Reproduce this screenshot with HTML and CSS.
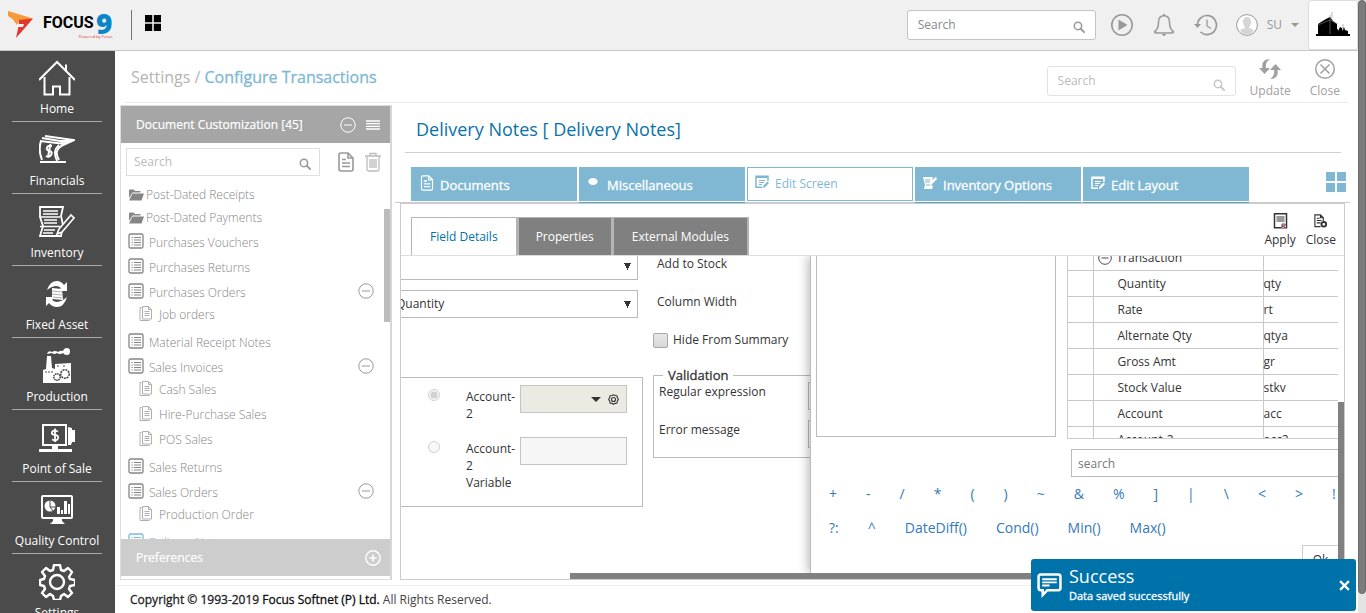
FILE: index.html
```html
<!DOCTYPE html>
<html lang="en">
<head>
<meta charset="utf-8">
<title>Configure Transactions</title>
<link rel="stylesheet" href="styles.css">
</head>
<body>
<svg class="defs" aria-hidden="true">
  <symbol id="i-search" viewBox="0 0 14 14"><circle cx="5.8" cy="5.8" r="4.3" fill="none" stroke="currentColor" stroke-width="1.8"/><path d="M9 9l4 4" stroke="currentColor" stroke-width="2.2" stroke-linecap="round"/></symbol>
  <symbol id="i-grid" viewBox="0 0 20 20"><path d="M0 0h9v9H0zM11 0h9v9h-9zM0 11h9v9H0zM11 11h9v9h-9z" fill="currentColor"/></symbol>
  <symbol id="i-minus" viewBox="0 0 16 16"><circle cx="8" cy="8" r="7.2" fill="none" stroke="currentColor"/><path d="M4 8h8" stroke="currentColor"/></symbol>
  <symbol id="i-plus" viewBox="0 0 16 16"><circle cx="8" cy="8" r="7.2" fill="none" stroke="currentColor" stroke-width="1.4"/><path d="M4.500 8h7M8 4.500v7" stroke="currentColor" stroke-width="1.600"/></symbol>
  <symbol id="i-folder" viewBox="0 0 16 12"><path d="M1 5V1.500Q1 .5 2 .5h3.500l1.500 1.500h5.500v1.500H4.500L1 9z" fill="currentColor"/><path d="M4.500 4.500H16L13.500 11.500H1z" fill="currentColor"/></symbol>
  <symbol id="i-list" viewBox="0 0 16 16"><rect x="1" y="1" width="14" height="14" rx="1.500" fill="none" stroke="currentColor" stroke-width="1.300"/><path d="M3.500 4.500h1.200M6 4.500h7M3.500 7h1.200M6 7h7M3.500 9.500h1.200M6 9.500h7M3.500 12h1.200M6 12h7" stroke="currentColor"/></symbol>
  <symbol id="i-pages" viewBox="0 0 14 16"><path d="M3.500 1.500h6l3 3v9.500h-9zM9.500 1.500v3h3M2.500 2.500h-1.500v13h9.500M5.500 6.500h5M5.500 8.500h5M5.500 10.500h5" fill="none" stroke="currentColor"/></symbol>
  <symbol id="i-doc" viewBox="0 0 16 20"><path d="M3 1h7l5 5v11q0 2-2 2H3q-2 0-2-2V3q0-2 2-2zM10 1v5h5M4 7.500h4M4 11h8M4 14.500h8" fill="none" stroke="currentColor" stroke-width="1.600"/></symbol>
  <symbol id="i-edit" viewBox="0 0 14 14"><path d="M13 6V1.200H1v11h6" fill="none" stroke="currentColor" stroke-width="1.500"/><path d="M1 1h12v2H1zM8 13l.5-2.500L12.500 6.500 14 8l-4 4.300z" fill="currentColor"/><path d="M4 5.500h6M4 7.500h5M4 9.500h3" stroke="currentColor"/></symbol>
</svg>
<div class="app">
  <div class="page">
    <header class="topbar">
      <div class="logo">
        <svg class="logo-mark" viewBox="0 0 26 28"><path d="M0 0L25 7.500 17 10H8L0 5z" fill="#f5993b"/><path d="M0 4l8 6v-2l-5-5zM3 6l6 8 2-5z" fill="#f5993b"/><path d="M11 9l14-1.500L16 18 8 27l2-9z" fill="#e2362b"/><path d="M9 13h7l-1 3H9.500z" fill="#f0f0f0"/></svg>
        <div class="logo-text">
          <div><span class="logo-word">FOCUS</span><span class="logo-nine">9</span></div>
          <small>Powered by Focus</small>
        </div>
      </div>
      <button class="apps" aria-label="Applications"><svg viewBox="0 0 20 20"><use href="#i-grid"/></svg></button>
      <label class="search search-top"><input type="text" placeholder="Search" aria-label="Search"><svg viewBox="0 0 14 14"><use href="#i-search"/></svg></label>
      <button class="top-icon" aria-label="Play"><svg viewBox="0 0 24 24"><circle cx="12" cy="12" r="10.200" fill="none" stroke="currentColor" stroke-width="1.600"/><path d="M8.500 6.500L17.500 12l-9 5.500z" fill="currentColor"/></svg></button>
      <button class="top-icon" aria-label="Notifications"><svg viewBox="0 0 24 24"><path d="M12 2.800c-4 0-5.500 3.200-5.500 6.500 0 5-1.500 7.700-4 9.500 0 1 1 1.200 2.500 1.200h14c1.500 0 2.500-.2 2.500-1.200-2.500-1.800-4-4.500-4-9.500 0-3.300-1.500-6.500-5.500-6.500z" fill="none" stroke="currentColor" stroke-width="1.500"/><path d="M10 21h4q-.5 2-2 2t-2-2zM11 1h2v2h-2z" fill="currentColor"/></svg></button>
      <button class="top-icon" aria-label="History"><svg viewBox="0 0 24 24"><path d="M3.500 13a9.500 9.500 0 1 1 3 6" fill="none" stroke="currentColor" stroke-width="1.700"/><path d="M0 11h7l-3.500 4z" fill="currentColor"/><path d="M13 6.500v6.500l4 2.500" fill="none" stroke="currentColor" stroke-width="1.300"/></svg></button>
      <button class="user"><svg viewBox="0 0 22 22"><circle cx="11" cy="11" r="10.400" fill="#fff" stroke="#999"/><path d="M11 3c-3 0-4 2-4 5 0 2.500 1 4 2 5-.5 2-4 2-5 3.500C6 19 8 20.500 11 20.500s5-1.500 7-4c-1-1.500-4.500-1.500-5-3.500 1-1 2-2.500 2-5 0-3-1-5-4-5z" fill="#d6d6d6"/></svg>SU<i class="caret"></i></button>
      <div class="company"><svg viewBox="0 0 34 26"><path d="M2 23V12l3-2 5-3 4-2 3 4 4 3v11zM20 23v-5l2-1v2l2-4 2 1v3l2-4 1 3 3 1v4z" fill="#000"/><path d="M0 22h34v2H0z" fill="#000"/><path d="M14 22V3M16 6V0M27 18v-6" stroke="#888" stroke-width=".6"/><path d="M2 13l12-5 8 4" fill="none" stroke="#999" stroke-width=".5"/></svg></div>
    </header>
    <div class="body">
      <nav class="nav">
        <a href="#home"><svg viewBox="0 0 36 36"><path d="M0 20L18 2l18 18M5.500 17v17.500H14v-8h7v8h9.500V17M27 10V4.500" fill="none" stroke="#fff" stroke-width="2"/></svg>Home</a>
        <a href="#financials"><svg viewBox="0 0 36 36"><path d="M2 9Q-1 18 3 28" fill="none" stroke="#fff" stroke-width="2"/><path d="M6 4l29 4-11 5Q14 18 20 28M1 9l25 3M3 6l24 4" fill="none" stroke="#fff" stroke-width="2"/><path d="M20 13q-7 6-2 16M24 12l10-4-12 1z" fill="none" stroke="#fff" stroke-width="1.800"/><path d="M1 29h26v2H1z" fill="#fff"/><path d="M13 14q-4-1-5 1.500t2.500 3.500 1.500 4-5 1M11.500 12L9 25" fill="none" stroke="#fff" stroke-width="2"/></svg>Financials</a>
        <a href="#inventory"><svg viewBox="0 0 36 36"><path d="M1 3h23l-2 9 2 9-2 11H1l3-10-3-9z" fill="none" stroke="#fff" stroke-width="1.800"/><path d="M4 7h15M4 10h15M5 16h13M5 19h13M5 26h11M4 29h10M1 13h20M1 22.500h20" stroke="#fff" stroke-width="1.500"/><path d="M20 25L32 11l3 3-12 14-5 2z" fill="#4b4b4b" stroke="#fff" stroke-width="1.600"/></svg>Inventory</a>
        <a href="#assets"><svg viewBox="0 0 36 36"><path d="M8 14Q11 5 18 5q4 0 7 4l3-3v9h-9l3-3q-5-5-14 2z" fill="#fff"/><path d="M28 21q-3 10-10 10-5 0-8-4l-3 3v-9h9l-3 3q6 5 15-3z" fill="#fff"/><path d="M13 12l10 1 1 11-11-1z" fill="#fff"/><path d="M13 15l10 1M13 18l10 1M14 21l9 1" stroke="#999" stroke-width=".8"/></svg>Fixed Asset</a>
        <a href="#production"><svg viewBox="0 0 36 36"><path d="M4 35V22l3-1L8 8h4l1 12 3 1v-5l16-1v20z" fill="#fff"/><path d="M8 6q1-4 5-2 3-2 6 0 3-2 5-1 1-3 4-3t3 3.500-3 3.500-4-2q-3 2-6 0-3 2-5 0z" fill="#fff"/><path d="M6 24h8M18 18h3M24 18h3" stroke="#4b4b4b" stroke-dasharray="2 1"/><circle cx="18" cy="29" r="3.200" fill="none" stroke="#4b4b4b" stroke-width="1.600" stroke-dasharray="1.500 .6"/><circle cx="26" cy="26" r="4.200" fill="none" stroke="#4b4b4b" stroke-width="1.600" stroke-dasharray="2 .8"/></svg>Production</a>
        <a href="#pos"><svg viewBox="0 0 36 36"><path d="M4 5h23v20H4z" fill="none" stroke="#fff" stroke-width="2"/><path d="M29 7l4 1v2h3v12h-3l-1 3h-3zM13 25h6v4h14v3H0v-3h13z" fill="#fff"/><path d="M19 11.500q-5-2-6 .5t3 3 3 3.500-6 1M16 8.500v13.500" fill="none" stroke="#fff" stroke-width="1.800"/></svg>Point of Sale</a>
        <a href="#quality"><svg viewBox="0 0 36 36"><rect x="3" y="4" width="30" height="22" rx="1" fill="none" stroke="#fff" stroke-width="2"/><path d="M14 27h9v2l3 3H11l3-3zM18 22v-7h3v7zM22 22v-4h2v4zM25 22V9h3v13zM29 22V12h2v10z" fill="#fff"/><circle cx="11" cy="14" r="5.500" fill="#fff"/><path d="M11 8v7h6M11 15l3 4" stroke="#4b4b4b" fill="none"/></svg>Quality Control</a>
        <a href="#settings"><svg viewBox="0 0 36 36"><path d="M15 1h6l1 5 3 1 4-3 4 4-3 5 1 2 5 1v5l-5 1-1 3 3 4-4 4-4-3-3 2-1 4h-6l-1-4-3-2-4 3-4-4 3-4-1-3-4-1v-5l4-1 1-3-3-4 4-4 4 3 3-1z" fill="none" stroke="#fff" stroke-width="2.400" stroke-linejoin="round"/><circle cx="18" cy="18" r="7" fill="none" stroke="#fff" stroke-width="2.400"/></svg>Settings</a>
      </nav>
      <main class="main">
        <div class="crumbs">
          <h1>Settings / <b>Configure Transactions</b></h1>
          <label class="search search-sub"><input type="text" placeholder="Search" aria-label="Search transactions"><svg viewBox="0 0 14 14"><use href="#i-search"/></svg></label>
          <button class="tool"><svg viewBox="0 0 22 22"><path d="M11 1Q2 1 3.500 10H0l5.500 6L11 10H7Q6 4 11 1zM11 21q9 0 7.500-9H22l-5.500-6L11 12h4q1 6-4 9z" fill="currentColor"/></svg>Update</button>
          <button class="tool"><svg viewBox="0 0 22 22"><circle cx="11" cy="11" r="9.300" fill="none" stroke="currentColor" stroke-width="1.500"/><path d="M6.500 6.500l9 9M15.500 6.500l-9 9" stroke="currentColor" stroke-width="1.500"/></svg>Close</button>
        </div>
        <div class="workspace">
          <aside class="side">
            <div class="side-head"><span>Document Customization [45]</span><svg viewBox="0 0 16 16"><use href="#i-minus"/></svg><svg class="menu" viewBox="0 0 14 10"><path d="M0 1h14M0 3.700h14M0 6.400h14M0 9h14" stroke="#fff" stroke-width="1.300"/></svg></div>
            <div class="side-tools">
              <label class="search search-side"><input type="text" placeholder="Search" aria-label="Search documents"><svg viewBox="0 0 14 14"><use href="#i-search"/></svg></label>
              <button aria-label="New"><svg viewBox="0 0 16 20"><use href="#i-doc"/></svg></button>
              <button class="trash" aria-label="Delete"><svg viewBox="0 0 16 20"><path d="M2 5v12.500q0 1.500 1.500 1.500h9q1.500 0 1.500-1.500V5M0 4h16M5 4V1.500h6V4M5 7v9M7 7v9M9 7v9M11 7v9" fill="none" stroke="currentColor" stroke-width="1.300"/></svg></button>
            </div>
            <div class="tree-wrap">
              <ul class="tree">
                <li class="folder"><svg viewBox="0 0 16 12"><use href="#i-folder"/></svg>Post-Dated Receipts</li>
                <li class="folder"><svg viewBox="0 0 16 12"><use href="#i-folder"/></svg>Post-Dated Payments</li>
                <li><svg><use href="#i-list"/></svg>Purchases Vouchers</li>
                <li><svg><use href="#i-list"/></svg>Purchases Returns</li>
                <li><svg><use href="#i-list"/></svg>Purchases Orders<svg class="fold"><use href="#i-minus"/></svg></li>
                <li class="sub"><svg><use href="#i-pages"/></svg>Job orders</li>
                <li><svg><use href="#i-list"/></svg>Material Receipt Notes</li>
                <li><svg><use href="#i-list"/></svg>Sales Invoices<svg class="fold"><use href="#i-minus"/></svg></li>
                <li class="sub"><svg><use href="#i-pages"/></svg>Cash Sales</li>
                <li class="sub"><svg><use href="#i-pages"/></svg>Hire-Purchase Sales</li>
                <li class="sub"><svg><use href="#i-pages"/></svg>POS Sales</li>
                <li><svg><use href="#i-list"/></svg>Sales Returns</li>
                <li><svg><use href="#i-list"/></svg>Sales Orders<svg class="fold"><use href="#i-minus"/></svg></li>
                <li class="sub"><svg><use href="#i-pages"/></svg>Production Order</li>
                <li class="current"><svg><use href="#i-list"/></svg>Delivery Notes</li>
              </ul>
              <div class="tree-bar"></div>
            </div>
            <div class="side-foot"><span>Preferences</span><svg viewBox="0 0 16 16"><use href="#i-plus"/></svg></div>
          </aside>
          <section class="detail">
            <h2>Delivery Notes [ Delivery Notes]</h2>
            <div class="tabs">
              <button><svg viewBox="0 0 16 20"><use href="#i-doc"/></svg>Documents</button>
              <button class="under"><svg viewBox="0 0 14 14"><ellipse cx="6" cy="5.500" rx="4.700" ry="3.500" fill="#fff"/></svg>Miscellaneous</button>
              <button class="on"><svg viewBox="0 0 14 14"><use href="#i-edit"/></svg>Edit Screen</button>
              <button class="under"><svg viewBox="0 0 14 14"><path d="M0 1h10l-1 3 4-3 1 2-6 6 2 1-1 3H1l1-4z" fill="#fff"/><path d="M2 4h5M2 6h5M3 9h4" stroke="#80b8d4"/></svg>Inventory Options</button>
              <button class="under"><svg viewBox="0 0 14 14"><use href="#i-edit"/></svg>Edit Layout</button>
              <svg class="tiles" viewBox="0 0 20 20"><use href="#i-grid"/></svg>
            </div>
            <div class="editor">
              <div class="editor-head">
                <div class="subtabs"><button class="on">Field Details</button><button>Properties</button><button>External Modules</button></div>
                <button class="act"><svg viewBox="0 0 14 16"><path d="M1 .8h12v14H1z" fill="none" stroke="currentColor" stroke-width="1.500"/><path d="M3 4h8M3 6h8M3 8h8" stroke="currentColor"/><path d="M8 10h4v5H8z" fill="#fff"/><path d="M8.500 15v-4h3v2h-3l3.500 2" fill="none" stroke="#734"/></svg>Apply</button>
                <button class="act"><svg viewBox="0 0 16 16"><path d="M8 14H2V1.500h6l3 3V8M8 1.500v3h3M4 5h3M4 7.500h5M4 10h4" fill="none" stroke="currentColor" stroke-width="1.200"/><circle cx="11.500" cy="11.500" r="2.500" fill="none" stroke="currentColor" stroke-width="2"/></svg>Close</button>
              </div>
              <div class="scroller">
                <div class="content">
                  <div class="form">
                    <div class="col-a">
                      <select aria-label="Field type"><option> </option></select>
                      <select aria-label="Map to"><option>Quantity</option></select>
                      <div class="choices">
                        <input type="radio" name="acc" id="acc1" checked disabled><label for="acc1">Account-2</label>
                        <div class="picker"><i class="caret"></i><svg viewBox="0 0 12 12"><path d="M6 .8l1.800.8 2 .2.300 2L11.300 6l-1.200 1.900-.3 2-2 .3L6 11.200l-1.800-1-2-.3-.3-2L.7 6l1.200-2.200.3-2 2-.2z" fill="none" stroke="currentColor" stroke-width="1.200"/><circle cx="6" cy="6" r="2.200" fill="none" stroke="currentColor" stroke-width="1.200"/></svg></div>
                        <input type="radio" name="acc" id="acc2" disabled><label for="acc2">Account-2 Variable</label>
                        <input type="text" class="plain" aria-label="Account-2 Variable" disabled>
                      </div>
                    </div>
                    <div class="col-b">
                      <label class="line" for="stock">Add to Stock</label><input class="edge" id="stock" type="text">
                      <label class="line" for="cw">Column Width</label><input class="edge" id="cw" type="text">
                      <label class="check"><input type="checkbox">Hide From Summary</label>
                      <fieldset><legend>Validation</legend>
                        <label for="re">Regular expression</label><input id="re" type="text">
                        <label for="em">Error message</label><input id="em" type="text">
                      </fieldset>
                    </div>
                  </div>
                  <div class="formula">
                    <div class="formula-top">
                      <textarea aria-label="Formula"></textarea>
                      <div class="vars"><table>
                        <tr><td></td><td class="group"><svg viewBox="0 0 16 16"><use href="#i-minus"/></svg>Transaction</td><td></td></tr>
                        <tr><td></td><td>Quantity</td><td>qty</td></tr>
                        <tr><td></td><td>Rate</td><td>rt</td></tr>
                        <tr><td></td><td>Alternate Qty</td><td>qtya</td></tr>
                        <tr><td></td><td>Gross Amt</td><td>gr</td></tr>
                        <tr><td></td><td>Stock Value</td><td>stkv</td></tr>
                        <tr><td></td><td>Account</td><td>acc</td></tr>
                        <tr><td></td><td>Account-2</td><td>acc2</td></tr>
                      </table></div>
                    </div>
                    <input class="find" type="text" placeholder="search" aria-label="Search variables">
                    <div class="ops"><a href="#o">+</a><a href="#o">-</a><a href="#o">/</a><a href="#o">*</a><a href="#o">(</a><a href="#o">)</a><a href="#o">~</a><a href="#o">&amp;</a><a href="#o">%</a><a href="#o">]</a><a href="#o">|</a><a href="#o">\</a><a href="#o">&lt;</a><a href="#o">&gt;</a><a href="#o">!</a></div>
                    <div class="ops"><a href="#o">?:</a><a href="#o">^</a><a href="#o">DateDiff()</a><a href="#o">Cond()</a><a href="#o">Min()</a><a href="#o">Max()</a></div>
                    <button class="ok">Ok</button>
                  </div>
                </div>
                <div class="vbar"></div>
              </div>
              <div class="hbar"></div>
            </div>
          </section>
        </div>
        <footer class="copy"><b>Copyright © 1993-2019 <strong>Focus Softnet (P) Ltd.</strong></b> All Rights Reserved.</footer>
      </main>
    </div>
  </div>
  <div class="page-bar"></div>
</div>
<div class="toast" role="status">
  <svg viewBox="0 0 24 24"><path d="M3.500 1.500h17q2 0 2 2v11q0 2-2 2H10L5.500 21v-4.500h-2q-2 0-2-2v-11q0-2 2-2z" fill="none" stroke="#fff" stroke-width="2.400"/><path d="M5 6h14M5 9h14M5 12h7" stroke="#fff" stroke-width="1.900"/></svg>
  <div><strong>Success</strong><span>Data saved successfully</span></div>
  <button aria-label="Dismiss"><svg viewBox="0 0 10 10"><path d="M1 1l8 8M9 1L1 9" stroke="#fff" stroke-width="2"/></svg></button>
</div>
</body>
</html>
```
FILE: styles.css
```css
* { box-sizing: border-box; }
body { margin: 0; font-family: "Open Sans", sans-serif; font-size: 12px; line-height: 16px; color: #333; background: #fff; overflow: hidden; }
button { font: inherit; color: inherit; background: none; border: 0; padding: 0; }
input, select, textarea { font: inherit; color: inherit; margin: 0; border-radius: 0; }
h1, h2, ul { margin: 0; padding: 0; font-weight: 400; }
a { text-decoration: none; }
svg { display: block; flex: none; }
.defs { position: absolute; width: 0; height: 0; }
.app { display: flex; height: 100vh; }
.page { flex: 1; min-width: 0; display: flex; flex-direction: column; }
.page-bar { width: 8px; padding-bottom: 21px; background: #e4e4e4; }
.page-bar::before { content: ""; display: block; height: 100%; background: #7c7c7c; border: 1px solid #6a6a6a; border-radius: 4px; }

.topbar { flex: none; display: flex; align-items: center; height: 51px; background: #f0f0f0; border-bottom: 1px solid #c6c6c6; color: #999; }
.logo { display: flex; align-items: center; width: 132px; height: 30px; padding-left: 8px; border-right: 1px solid #777; color: #000; }
.logo-mark { width: 26px; height: 28px; margin-right: 9px; }
.logo-text { display: flex; flex-direction: column; }
.logo-text div { display: flex; align-items: center; gap: 3px; }
.logo-word { width: 50px; font-family: Roboto, sans-serif; font-size: 16px; line-height: 24px; font-weight: 700; }
.logo-nine { font-size: 28px; line-height: 24px; font-weight: 800; color: #0a86c8; }
.logo-text small { align-self: flex-end; font-size: 4px; line-height: 4px; color: #d33; }
.apps { width: 16px; margin: 0 auto 4px 13px; color: #000; }
.apps svg { width: 16px; height: 16px; }
.search { display: flex; align-items: center; height: 30px; padding: 0 10px; border: 1px solid #c4c4c4; border-radius: 3px; background: #fff; color: #999; }
.search input { flex: 1; min-width: 0; border: 0; padding: 0; outline: 0; background: none; }
.search input::placeholder { color: #888; opacity: 1; }
.search svg { width: 12px; height: 12px; margin-top: 4px; }
.search-top { width: 189px; margin-right: 14px; }
.top-icon { margin-right: 18px; color: #999; }
.top-icon svg { width: 24px; height: 24px; }
.user { display: flex; align-items: center; gap: 9px; height: 28px; margin-right: 9px; }
.user svg { width: 22px; height: 22px; }
.caret { width: 0; height: 0; border: 4px solid transparent; border-top-color: currentColor; border-bottom: 0; }
.company { display: flex; align-items: center; justify-content: center; width: 50px; height: 50px; background: #fff; border: 1px solid #ddd; border-radius: 3px; }
.company svg { width: 34px; height: 26px; }

.body { flex: 1; min-height: 0; display: flex; }
.nav { width: 115px; flex: none; overflow: hidden; padding-top: 9px; background: #4b4b4b; }
.nav a { display: flex; flex-direction: column; align-items: center; gap: 5px; width: 90px; margin: 0 auto 10px 12px; padding-bottom: 4px; border-bottom: 1px solid #aaa; color: #fff; white-space: nowrap; }
.nav svg { width: 36px; height: 36px; }

.main { flex: 1; min-width: 0; display: flex; flex-direction: column; }
.crumbs { flex: none; display: flex; align-items: center; height: 52px; margin: 0 10px; padding: 0 8px 0 6px; border-bottom: 1px solid #ebebeb; color: #a0a0a0; }
.crumbs h1 { margin-right: auto; font-size: 16px; line-height: 24px; color: #b4b4b4; }
.crumbs b { font-weight: 400; color: #80b8d4; -webkit-text-stroke: 0.3px #80b8d4; }
.search-sub { width: 189px; margin: 8px 14px 0 0; border-color: #e2e2e2; color: #c6c6c6; }
.search-sub svg { margin-top: 8px; }
.search-sub input::placeholder, .search-side input::placeholder { color: #bbb; }
.tool { display: flex; flex-direction: column; align-items: center; gap: 3px; padding-top: 4px; }
.tool + .tool { margin-left: 19px; }
.tool svg { width: 22px; height: 22px; }

.workspace { flex: 1; min-height: 0; display: flex; margin: 2px 8px 0 5px; }
.side { width: 272px; flex: none; display: flex; flex-direction: column; border: 1px solid #ddd; border-right: 2px solid #d6d6d6; }
.side-head, .side-foot { flex: none; display: flex; align-items: center; height: 37px; padding: 0 10px 0 15px; background: #a6a6a6; color: #fff; -webkit-text-stroke: 0.2px #fff; }
.side-foot { margin-bottom: 3px; padding-right: 9px; background: #cdcdcd; }
.side-head span, .side-foot span { margin-right: auto; }
.side-head svg, .side-foot svg { width: 16px; height: 16px; }
.side-head .menu { width: 14px; height: 10px; margin-left: 10px; }
.side-tools { flex: none; display: flex; align-items: center; height: 40px; padding: 0 7px 2px 5px; }
.search-side { width: 194px; height: 28px; margin-right: 17px; padding: 0 8px 0 7px; border-radius: 0; border-color: #dedede; }
.side-tools button { width: 18px; margin-right: 9px; color: #999; }
.side-tools .trash { margin: 0; color: #bbb; }
.side-tools button svg { width: 18px; height: 20px; }
.tree-wrap { flex: 1; min-height: 0; display: flex; overflow: hidden; }
.tree { flex: 1; list-style: none; color: #858585; font-weight: 300; }
.tree li { display: flex; align-items: center; height: 25px; padding: 2px 10px 0 7px; }
.tree li svg { width: 16px; height: 16px; margin: 0 5px 4px 0; color: #858585; }
.tree .folder { height: 23px; padding-top: 0; }
.tree .folder svg { height: 12px; margin: 0 2px 0 0; }
.tree .sub { padding-left: 18px; position: relative; top: -3px; }
.tree .sub svg { width: 14px; margin-right: 6px; color: #b0b0b0; }
.tree li .fold { margin: 0 0 4px auto; color: #999; }
.tree .current, .tree .current svg { color: #80b8d4; }
.tree-bar { width: 6px; height: 113px; margin-top: 26px; background: #bcbcbc; }

.detail { flex: 1; min-width: 0; margin-left: 3px; display: flex; flex-direction: column; }
.detail h2 { flex: none; height: 48px; margin: 0 9px 14px 10px; padding-left: 11px; border-bottom: 1px solid #d0d0d0; font-size: 18px; line-height: 48px; color: #0a72a8; }
.tabs { flex: none; display: flex; align-items: flex-start; gap: 2px; height: 36px; padding: 0 4px 0 16px; border-bottom: 1px solid #ccc; }
.tabs button { display: flex; align-items: center; gap: 6px; flex: 0 1 166px; height: 34px; padding: 2px 0 0 9px; background: #80b8d4; color: #fff; font-size: 13px; -webkit-text-stroke: 0.3px #fff; }
.tabs button svg { width: 14px; height: 16px; margin-bottom: 4px; }
.tabs .under { height: 36px; padding: 0 0 0 8px; border-bottom: 1px solid #5b9fc2; box-shadow: inset 0 -1px #fff; }
.tabs .on { padding: 0 0 0 7px; background: #fff; border: 1px solid #80b8d4; color: #80b8d4; font-size: 12px; -webkit-text-stroke: 0; }
.tiles { width: 20px; height: 20px; margin: 5px 0 0 auto; color: #80b8d4; }
.editor { flex: 1; min-height: 0; display: flex; flex-direction: column; margin: 0 5px; border: 1px solid #ccc; }
.editor-head { flex: none; display: flex; align-items: flex-end; height: 52px; padding: 0 8px 0 10px; border-bottom: 1px solid #ddd; }
.subtabs { display: flex; margin-right: auto; }
.subtabs button { height: 38px; padding: 0 17px; border: 1px solid #b4b4b4; border-bottom: 0; border-right-width: 2px; background: #808080; color: #fff; }
.subtabs .on { padding: 0 18px; background: #fff; color: #0072aa; }
.subtabs button:last-child { padding: 0 18px; }
.act { display: flex; flex-direction: column; align-items: center; gap: 3px; margin-left: 10px; padding-bottom: 7px; }
.act svg { width: 15px; height: 16px; }

.scroller { flex: 1; min-height: 0; display: flex; }
.content { flex: 1; min-width: 0; display: flex; overflow: hidden; }
.vbar { width: 6px; margin-top: 146px; background: #808080; }
.hbar { flex: none; height: 6px; margin-left: 169px; background: #808080; }
.form { width: 409px; flex: none; display: flex; gap: 10px; overflow: hidden; }
.col-a { width: 242px; flex: none; margin-top: -4px; }
.col-a select { appearance: none; display: block; width: 257px; height: 28px; margin: 0 0 10px -20px; padding: 0 14px; border: 1px solid #bbb; background: conic-gradient(from -27deg at 50% 100%, #333 54deg, #fff 0) no-repeat right 6px center / 7px 7px #fff; }
.choices { display: grid; grid-template-columns: 65px 54px 107px; grid-template-rows: 51px 60px; align-items: start; row-gap: 1px; height: 130px; margin-top: 59px; padding-top: 7px; border: 1px solid #bbb; border-left: 0; }
.choices label { width: 52px; padding-top: 3px; line-height: 17px; }
.choices input[type=radio] { width: 12px; height: 12px; margin: 4px 0 0 27px; }
.picker, .plain { display: flex; align-items: center; justify-content: flex-end; gap: 7px; height: 28px; padding: 0 7px; border: 1px solid #c4c4c4; background: #ebebe4; }
.plain { width: 107px; background: #f6f6f6; }
.picker .caret { border-width: 5px 5px 0; }
.picker svg { width: 11px; height: 11px; }
.col-b { flex: none; width: 300px; display: grid; grid-template-columns: 157px 120px; grid-template-rows: 24px 28px 24px; row-gap: 10px; align-content: start; }
.col-b .line { padding-left: 4px; }
.col-b .edge { height: 28px; margin-top: -4px; border: 1px solid #aaa; }
.col-b .edge + .line { line-height: 24px; }
.col-b .edge ~ .edge { margin-top: 0; }
.check { grid-column: 1 / 3; display: flex; align-items: center; gap: 5px; }
.check input { appearance: none; width: 15px; height: 15px; border: 1px solid #a8a8a8; border-radius: 2px; background: linear-gradient(#e8e8e8, #d8d8d8); }
.col-b fieldset { grid-column: 1 / 3; display: grid; grid-template-columns: 149px 120px; row-gap: 10px; margin: 6px 0 0; padding: 0 0 9px 5px; border: 1px solid #bbb; }
.col-b legend { margin-left: 4px; padding: 0 5px; font-size: 13px; line-height: 14px; -webkit-text-stroke: 0.3px #333; }
.col-b fieldset label { line-height: 20px; }
.col-b fieldset input { height: 28px; border: 1px solid #bbb; }

.formula { flex: 1; min-width: 0; position: relative; display: flex; flex-direction: column; padding-left: 5px; background: #fff; border-left: 1px solid #bbb; box-shadow: -2px 0 10px rgba(0, 0, 0, .28); }
.formula-top { flex: none; display: flex; height: 183px; gap: 11px; }
.formula-top textarea { width: 240px; height: 181px; flex: none; border: 1px solid #bbb; border-top: 0; resize: none; }
.vars { flex: 1; overflow: hidden; border-bottom: 1px solid #ccc; border-left: 1px solid #ccc; }
.vars table { width: 100%; margin-top: -12px; border-collapse: collapse; table-layout: fixed; }
.vars td { height: 26px; padding: 2px 0 0 24px; border: 1px solid #c8c8c8; border-right: 0; border-top: 0; }
.vars td:first-child { width: 25px; padding: 0; border-left: 0; }
.vars td:nth-child(2) { width: 170px; }
.vars td:last-child { padding: 2px 0 0; }
.vars td.group { padding-left: 4px; }
.group svg { display: inline-block; width: 14px; height: 14px; margin-right: 5px; vertical-align: -3px; }
.find { flex: none; height: 28px; margin: 10px 0 0 255px; padding: 0 6px; border: 1px solid #bbb; border-right: 0; }
.find::placeholder { color: #777; }
.ops { flex: none; display: flex; gap: 29px; height: 34px; padding-left: 13px; font-size: 14px; line-height: 34px; overflow: hidden; }
.ops a { color: #337ab7; flex: none; }
.ok { flex: none; align-self: flex-end; width: 36px; height: 30px; border: 1px solid #ccc; border-right: 0; }

.copy { flex: none; height: 28px; margin-top: 5px; padding-left: 15px; border-top: 1px solid #eee; line-height: 28px; color: #444; }
.copy b { font-weight: 400; -webkit-text-stroke: 0.3px #222; color: #222; }
.copy strong { font-weight: 400; color: #000; }

.toast { position: fixed; right: 10px; bottom: 2px; display: flex; align-items: center; width: 325px; height: 52px; padding: 0 6px; border-radius: 3px; background: #0072aa; color: #fff; }
.toast > svg { width: 25px; height: 25px; margin-right: 7px; }
.toast div { flex: 1; display: flex; flex-direction: column; }
.toast strong { font-size: 18px; line-height: 22px; font-weight: 400; }
.toast span { font-size: 11px; line-height: 18px; -webkit-text-stroke: 0.3px #fff; }
.toast button svg { width: 11px; height: 11px; }
```
